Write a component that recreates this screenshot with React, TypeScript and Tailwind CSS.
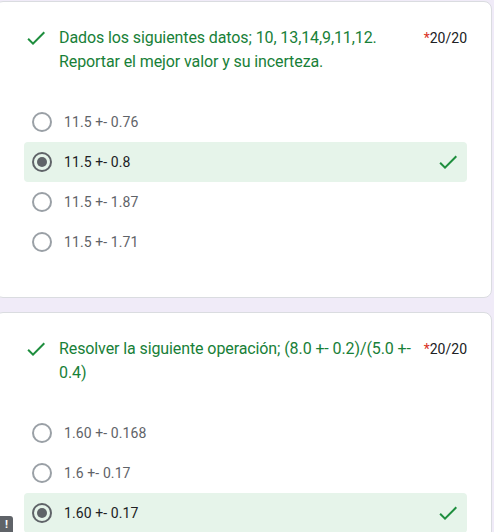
import React from "react";

type Option = { label: string; selected?: boolean };

type Question = { title: string; points: string; options: Option[] };

const questions: Question[] = [
  {
    title: "Dados los siguientes datos; 10, 13,14,9,11,12. Reportar el mejor valor y su incerteza.",
    points: "20/20",
    options: [
      { label: "11.5 +- 0.76" },
      { label: "11.5 +- 0.8", selected: true },
      { label: "11.5 +- 1.87" },
      { label: "11.5 +- 1.71" },
    ],
  },
  {
    title: "Resolver la siguiente operación; (8.0 +- 0.2)/(5.0 +- 0.4)",
    points: "20/20",
    options: [
      { label: "1.60 +- 0.168" },
      { label: "1.6 +- 0.17" },
      { label: "1.60 +- 0.17", selected: true },
    ],
  },
];

function CheckIcon({ className }: { className?: string }) {
  return (
    <svg viewBox="0 0 24 24" className={className} fill="currentColor">
      <path d="M9 16.17L4.83 12l-1.42 1.41L9 19 21 7l-1.41-1.41z" />
    </svg>
  );
}

function Radio({ selected }: { selected?: boolean }) {
  if (selected) {
    return (
      <div className="w-5 h-5 rounded-full border-2 border-[#5f6368] flex items-center justify-center shrink-0">
        <div className="w-[10px] h-[10px] rounded-full bg-[#5f6368]" />
      </div>
    );
  }
  return <div className="w-5 h-5 rounded-full border-2 border-[#9aa0a6] shrink-0" />;
}

function QuestionCard({ q }: { q: Question }) {
  return (
    <div className="-ml-[5px] w-[497px] bg-white border border-[#dadce0] rounded-lg pl-[28px] pr-[24px] pt-[24px] pb-[35px]">
      <div className="flex items-start">
        <CheckIcon className="w-6 h-6 shrink-0 text-[#1e8e3e]" />
        <div className="flex-1 ml-[11px] text-[16px] leading-6 tracking-[-0.1px] text-[#188038]">
          {q.title}
        </div>
        <div className="shrink-0 ml-[6px] text-[14px] leading-6 text-[#202124]">
          <span className="text-[#d93025]">*</span>
          {q.points}
        </div>
      </div>
      <div className="mt-[28px] flex flex-col">
        {q.options.map((o) => (
          <div
            key={o.label}
            className={`h-10 flex items-center pl-[8px] pr-[7px] rounded ${
              o.selected ? "bg-[#e6f4ea]" : ""
            }`}
          >
            <Radio selected={o.selected} />
            <span
              className={`ml-[12px] flex-1 text-[14px] tracking-[0.1px] ${
                o.selected ? "text-[#202124]" : "text-[#5f6368]"
              }`}
            >
              {o.label}
            </span>
            {o.selected && <CheckIcon className="w-6 h-6 text-[#1e8e3e]" />}
          </div>
        ))}
      </div>
    </div>
  );
}

export default function App() {
  return (
    <div className="relative h-[532px] overflow-hidden bg-[#f0ebf8] pt-[1px] font-['Roboto',sans-serif]">
      <div className="flex flex-col gap-[14px]">
        {questions.map((q) => (
          <QuestionCard key={q.title} q={q} />
        ))}
      </div>
      <div className="absolute left-0 bottom-0 w-[13px] h-[16px] bg-[#5f6368] rounded-tr-[3px] flex items-center justify-center text-white text-[11px] font-bold leading-none">
        !
      </div>
    </div>
  );
}
